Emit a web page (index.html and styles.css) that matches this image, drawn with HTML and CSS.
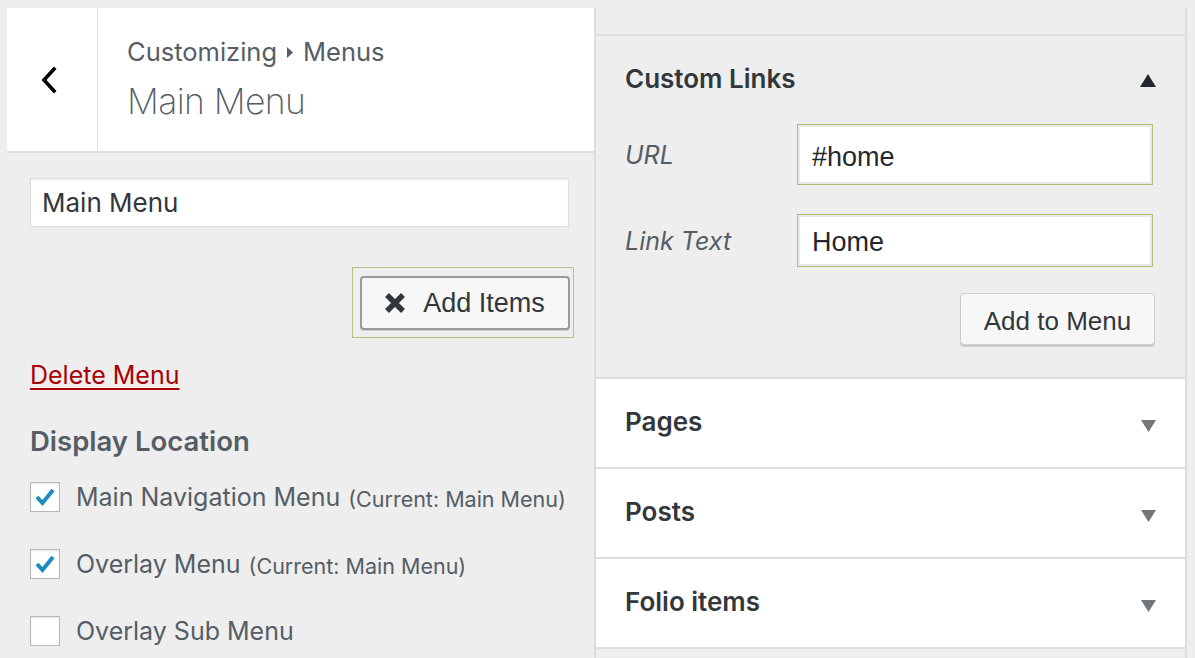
FILE: index.html
```html
<!DOCTYPE html>
<html>
<head>
<meta charset="utf-8">
<link rel="stylesheet" href="styles.css">
</head>
<body>
<div class="wrap">
  <div class="left">
    <div class="header">
      <div class="back">
        <svg width="20" height="28" viewBox="0 0 20 28"><path d="M15 3 L5 14 L15 25" fill="none" stroke="#000" stroke-width="3.6" stroke-linecap="square"/></svg>
      </div>
      <div class="titles">
        <div class="action">Customizing <svg class="crumb" width="8" height="13" viewBox="0 0 8 13"><path d="M1 1 L7 6.5 L1 12 Z" fill="#555d66"/></svg> Menus</div>
        <div class="title">Main Menu</div>
      </div>
    </div>
    <div class="body">
      <div class="name-input">Main Menu</div>
      <div class="add-wrap">
        <div class="btn add-items">
          <svg width="24" height="24" viewBox="0 0 24 24"><path d="M4 4 L20 20 M20 4 L4 20" stroke="#32373c" stroke-width="5.5" stroke-linecap="butt"/></svg>
          <span>Add Items</span>
        </div>
      </div>
      <a class="delete">Delete Menu</a>
      <div class="loc-title">Display Location</div>
      <div class="loc-row">
        <span class="cb"><svg width="28" height="28" viewBox="0 0 28 28"><path d="M6 14 L11.5 20 L22 7" fill="none" stroke="#1e8cbe" stroke-width="4"/></svg></span>
        <span class="lbl">Main Navigation Menu</span><span class="cur">(Current: Main Menu)</span>
      </div>
      <div class="loc-row">
        <span class="cb"><svg width="28" height="28" viewBox="0 0 28 28"><path d="M6 14 L11.5 20 L22 7" fill="none" stroke="#1e8cbe" stroke-width="4"/></svg></span>
        <span class="lbl">Overlay Menu</span><span class="cur">(Current: Main Menu)</span>
      </div>
      <div class="loc-row">
        <span class="cb"></span>
        <span class="lbl">Overlay Sub Menu</span>
      </div>
    </div>
  </div>
  <div class="right">
    <div class="right-top"></div>
    <div class="custom">
      <div class="sec-head">
        <span class="sec-title">Custom Links</span>
        <svg width="16" height="13" viewBox="0 0 16 13"><path d="M0 13 L8 0 L16 13 Z" fill="#23282d"/></svg>
      </div>
      <div class="field url-row">
        <span class="flabel">URL</span>
        <div class="finput tall">#home</div>
      </div>
      <div class="field text-row">
        <span class="flabel">Link Text</span>
        <div class="finput">Home</div>
      </div>
      <div class="btn-row"><div class="btn add-menu">Add to Menu</div></div>
    </div>
    <div class="acc"><span class="sec-title">Pages</span><svg width="15" height="12" viewBox="0 0 15 12"><path d="M0 0 L15 0 L7.5 12 Z" fill="#72777c"/></svg></div>
    <div class="acc"><span class="sec-title">Posts</span><svg width="15" height="12" viewBox="0 0 15 12"><path d="M0 0 L15 0 L7.5 12 Z" fill="#72777c"/></svg></div>
    <div class="acc"><span class="sec-title">Folio items</span><svg width="15" height="12" viewBox="0 0 15 12"><path d="M0 0 L15 0 L7.5 12 Z" fill="#72777c"/></svg></div>
  </div>
</div>
</body>
</html>
```
FILE: styles.css
```css
html, body {
  margin: 0;
  padding: 0;
  background: #eeeeee;
}
body {
  font-family: "Inter", "Roboto", sans-serif;
  color: #555d66;
}
.wrap {
  display: flex;
  padding: 8px 0 0 7px;
  height: 658px;
  box-sizing: border-box;
}
.left {
  width: 587px;
  display: flex;
  flex-direction: column;
}
.header {
  display: flex;
  height: 143px;
  background: #fff;
  border-bottom: 2px solid #dddddd;
}
.back {
  width: 91px;
  border-right: 1px solid #dddddd;
  display: flex;
  align-items: center;
  justify-content: center;
  padding-right: 6px;
  box-sizing: border-box;
}
.titles {
  padding: 29px 0 0 29px;
}
.action {
  font-size: 25.5px;
  line-height: 30px;
  color: #555d66;
  display: flex;
  align-items: center;
  gap: 9px;
}
.crumb { margin-top: 1px; }
.title {
  margin-top: 13px;
  font-size: 35.5px;
  line-height: 44px;
  font-weight: 200;
  letter-spacing: -0.6px;
  color: #555d66;
}
.body {
  display: flex;
  flex-direction: column;
  padding: 0 25px 0 23px;
}
.name-input {
  margin-top: 25px;
  height: 49px;
  box-sizing: border-box;
  background: #fff;
  border: 1px solid #dddddd;
  box-shadow: inset 0 1px 2px rgba(0,0,0,0.07);
  font-size: 26px;
  line-height: 47px;
  padding-left: 11px;
  color: #32373c;
}
.add-wrap {
  align-self: flex-end;
  margin-top: 40px;
  margin-right: -5px;
  border: 1px solid #b7c27e;
  padding: 8px 3px 7px 7px;
}
.btn {
  box-sizing: border-box;
  background: #f7f7f7;
  border-radius: 4px;
  font-family: "Liberation Sans", Arial, sans-serif;
  font-size: 26px;
  color: #32373c;
  display: flex;
  align-items: center;
  justify-content: center;
}
.add-items {
  width: 210px;
  height: 54px;
  border: 2px solid #9a9a9a;
  box-shadow: 0 1px 0 #ccc;
  gap: 16px;
  font-size: 27px;
  padding-right: 2px;
}
.delete {
  margin-top: 22px;
  font-size: 25px;
  line-height: 30px;
  color: #aa0000;
  text-decoration: underline;
  text-underline-offset: 4px;
  text-decoration-thickness: 2px;
}
.loc-title {
  margin-top: 35px;
  font-size: 27.5px;
  line-height: 32px;
  font-weight: 600;
  color: #555d66;
}
.loc-row {
  display: flex;
  align-items: center;
  height: 30px;
  margin-top: 37px;
}
.loc-title + .loc-row { margin-top: 25px; }
.cb {
  width: 30px;
  height: 30px;
  box-sizing: border-box;
  border: 1px solid #b4b9be;
  background: #fff;
  box-shadow: inset 0 1px 2px rgba(0,0,0,0.1);
  display: flex;
  align-items: center;
  justify-content: center;
  margin-right: 16px;
}
.lbl {
  font-size: 25px;
  color: #555d66;
}
.cur {
  font-size: 21.5px;
  margin-left: 8px;
  color: #555d66;
  padding-top: 3px;
}
.right {
  width: 589px;
  border-left: 2px solid #dddddd;
  border-right: 2px solid #dddddd;
  display: flex;
  flex-direction: column;
  margin-top: -1px;
}
.right-top {
  height: 27px;
  border-bottom: 2px solid #dddddd;
}
.custom {
  background: #eeeeee;
  border-bottom: 2px solid #dddddd;
  padding: 26px 30px 30px 29px;
}
.sec-head {
  display: flex;
  justify-content: space-between;
  align-items: center;
  height: 32px;
}
.sec-head svg { margin-right: -1px; margin-top: 4px; }
.sec-title {
  font-size: 26px;
  font-weight: 600;
  color: #32373c;
}
.field {
  display: flex;
  align-items: center;
}
.url-row { margin-top: 30px; }
.text-row { margin-top: 29px; }
.flabel {
  width: 172px;
  font-size: 25px;
  font-style: italic;
  color: #555d66;
}
.finput {
  flex: 1;
  margin-right: 2px;
  height: 53px;
  box-sizing: border-box;
  background: #fff;
  border: 1px solid #b2be74;
  box-shadow: inset 0 0 0 2px #e8e8e8;
  font-family: "Liberation Sans", Arial, sans-serif;
  font-size: 27px;
  color: #23282d;
  display: flex;
  align-items: center;
  padding: 3px 0 0 14px;
}
.finput.tall { height: 61px; padding-top: 5px; }
.btn-row {
  display: flex;
  justify-content: flex-end;
  margin-top: 26px;
}
.add-menu {
  width: 195px;
  height: 52px;
  border: 1px solid #cccccc;
  box-shadow: 0 2px 0 #cccccc;
  margin-bottom: 2px;
  padding-top: 4px;
}
.acc {
  height: 88px;
  background: #fff;
  border-bottom: 2px solid #dddddd;
  display: flex;
  align-items: center;
  justify-content: space-between;
  padding: 0 29px 0 29px;
}
.acc svg { margin-top: 6px; }
.acc .sec-title { margin-top: -3px; }
```
